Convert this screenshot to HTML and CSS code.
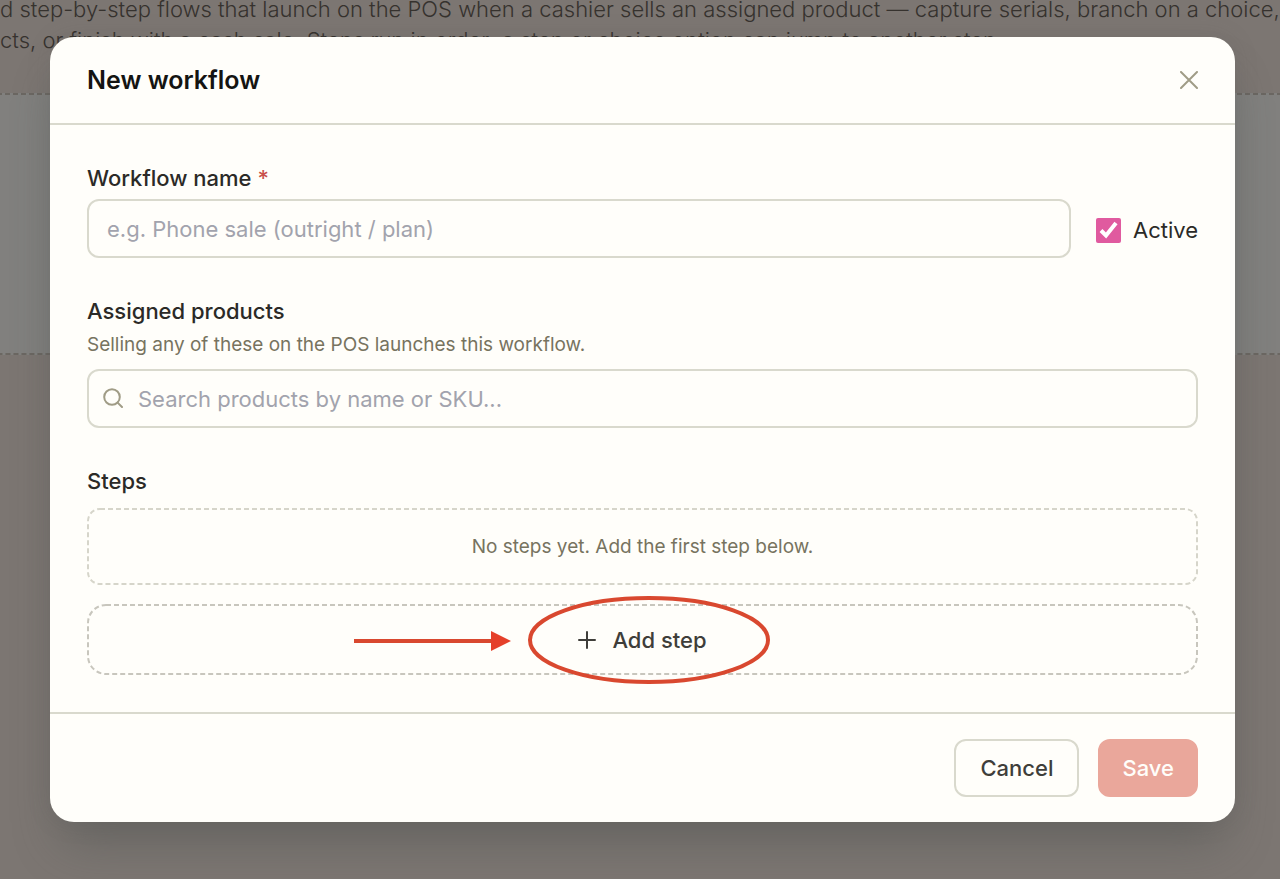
FILE: index.html
```html
<!DOCTYPE html>
<html lang="en">
<head>
    <meta charset="UTF-8">
    <meta name="viewport" content="width=device-width, initial-scale=1.0">
    <title>New workflow</title>
    <link rel="stylesheet" href="styles.css">
</head>
<body>
    <main class="page">
        <p class="page-intro">d step-by-step flows that launch on the POS when a cashier sells an assigned product — capture serials, branch on a choice,<br>cts, or finish with a cash sale. Steps run in order; a step or choice option can jump to another step.</p>
        <div class="page-empty">
            <svg class="dashes" aria-hidden="true"><rect class="dashes-line"/></svg>
        </div>
    </main>

    <div class="overlay">
        <form class="modal" role="dialog" aria-labelledby="modal-title">
            <header class="modal-header">
                <h1 id="modal-title">New workflow</h1>
                <button type="button" class="btn-close" aria-label="Close">
                    <svg width="18" height="18" viewBox="0 0 18 18"><path d="M1 1l16 16M17 1L1 17"/></svg>
                </button>
            </header>

            <div class="modal-body">
                <div class="name-row">
                    <div class="name-field">
                        <label class="form-label" for="name">Workflow name <span class="required">*</span></label>
                        <input type="text" id="name" class="form-control" placeholder="e.g. Phone sale (outright / plan)">
                    </div>
                    <label class="active-field">
                        <input type="checkbox" class="checkbox" checked>
                        Active
                    </label>
                </div>

                <div class="form-group">
                    <label class="form-label" for="products">Assigned products</label>
                    <p class="form-help">Selling any of these on the POS launches this workflow.</p>
                    <div class="search">
                        <svg class="search-icon" width="20" height="20" viewBox="0 0 20 20"><circle cx="9" cy="9" r="7.8"/><path d="M14.6 14.6L19 19"/></svg>
                        <input type="text" id="products" class="form-control" placeholder="Search products by name or SKU...">
                    </div>
                </div>

                <div class="form-group">
                    <h2 class="form-label">Steps</h2>
                    <div class="steps-empty">
                        <svg class="dashes" aria-hidden="true"><rect class="dashes-line"/></svg>
                        No steps yet. Add the first step below.
                    </div>
                    <button type="button" class="btn-add">
                        <svg class="dashes" aria-hidden="true"><rect class="dashes-line"/></svg>
                        <svg class="plus-icon" width="18" height="18" viewBox="0 0 18 18"><path d="M9 1v16M1 9h16"/></svg>
                        Add step
                        <svg class="callout" width="418" height="90" viewBox="0 0 418 90" aria-hidden="true">
                            <path class="callout-line" d="M0 45h140"/>
                            <path class="callout-head" d="M137 35l20 10-20 10z"/>
                            <ellipse class="callout-line" cx="295" cy="44" rx="119" ry="42"/>
                        </svg>
                    </button>
                </div>
            </div>

            <footer class="modal-footer">
                <button type="button" class="btn">Cancel</button>
                <button type="submit" class="btn btn-primary" disabled>Save</button>
            </footer>
        </form>
    </div>
</body>
</html>
```
FILE: styles.css
```css
* {
    box-sizing: border-box;
}
body {
    margin: 0;
    font-family: Inter, "Liberation Sans", sans-serif;
    font-size: 22px;
    line-height: 32px;
    color: #2b2a27;
    background: #7c7672;
    overflow: hidden;
}
h1, h2, p {
    margin: 0;
}
button, input {
    font: inherit;
    color: inherit;
}
svg {
    fill: none;
}

/* page behind the modal */
.page {
    color: #36322e;
}
.page-intro {
    margin-top: -6px;
    line-height: 31px;
    font-weight: 300;
    white-space: nowrap;
}
.page-empty {
    position: relative;
    height: 262px;
    margin: 37px -24px 0;
    background: #81807e;
}
.page-empty .dashes {
    stroke: #6b6762;
}

/* dashed frame */
.dashes {
    position: absolute;
    inset: 0;
    width: 100%;
    height: 100%;
    stroke: #d6d5ca;
    stroke-width: 2;
    stroke-dasharray: 5 3;
}
.dashes-line {
    x: 1px;
    y: 1px;
    width: calc(100% - 2px);
    height: calc(100% - 2px);
    rx: 12px;
}

.overlay {
    position: absolute;
    inset: 0;
    padding: 37px 45px 57px 50px;
}
.modal {
    background: #fffefa;
    border-radius: 24px;
    box-shadow: 0 32px 48px -12px rgba(75, 80, 78, 0.45), 0 0 24px rgba(85, 85, 85, 0.15);
}
.modal-header {
    display: flex;
    align-items: center;
    justify-content: space-between;
    height: 88px;
    padding: 0 37px;
    border-bottom: 2px solid #d9d9cd;
}
.modal-header h1 {
    font-size: 25px;
    font-weight: 600;
    color: #141412;
}
.btn-close {
    display: flex;
    padding: 0;
    border: 0;
    background: none;
    stroke: #a09c86;
    stroke-width: 2;
    stroke-linecap: round;
    cursor: pointer;
}

.modal-body {
    padding: 37px;
}
.name-row {
    display: flex;
    align-items: flex-end;
    gap: 25px;
}
.name-field {
    flex: 1;
}
.form-group {
    margin-top: 37px;
}
.form-label {
    display: block;
    margin-bottom: 5px;
    font-size: 22px;
    font-weight: 500;
}
.required {
    color: #c9504a;
}
.form-control {
    display: block;
    width: 100%;
    height: 59px;
    padding: 0 18px;
    border: 2px solid #d9d9cd;
    border-radius: 12px;
    background: #fffefa;
}
.form-control::placeholder {
    color: #a2a3ad;
    opacity: 1;
}
.active-field {
    display: flex;
    align-items: center;
    gap: 12px;
    height: 56px;
}
.checkbox {
    width: 25px;
    height: 25px;
    margin: 0;
    accent-color: #e05a9f;
}
.form-group .form-label {
    margin-bottom: 0;
}
.form-help {
    padding: 2px 0 8px;
    font-size: 19px;
    color: #77735f;
}
.search {
    position: relative;
}
.search .form-control {
    padding-left: 49px;
}
.search-icon {
    position: absolute;
    top: 19px;
    left: 16px;
    stroke: #a09c86;
    stroke-width: 2;
    stroke-linecap: round;
}
.steps-empty {
    position: relative;
    margin: 11px 0 19px;
    padding: 23px;
    text-align: center;
    font-size: 19px;
    line-height: 31px;
    color: #77735f;
}
.btn-add {
    position: relative;
    display: flex;
    align-items: center;
    justify-content: center;
    gap: 16px;
    width: 100%;
    height: 71px;
    border: 0;
    background: none;
    font-weight: 500;
    color: #3f3e3a;
    cursor: pointer;
}
.btn-add .dashes {
    stroke: #c8c6bd;
}
.btn-add .dashes-line {
    rx: 18px;
}
.plus-icon {
    stroke: #3f3e3a;
    stroke-width: 2;
    stroke-linecap: round;
}

/* arrow and ring pointing at the button */
.callout {
    position: absolute;
    top: -8px;
    left: calc(50% - 289px);
    pointer-events: none;
}
.callout-line {
    stroke: #d9482f;
    stroke-width: 4;
}
.callout-head {
    fill: #e5402a;
}

.modal-footer {
    display: flex;
    justify-content: flex-end;
    gap: 19px;
    padding: 25px 37px;
    border-top: 2px solid #d9d9cd;
}
.btn {
    height: 58px;
    padding: 0 24px;
    border: 2px solid #d9d9cd;
    border-radius: 12px;
    background: #fffefa;
    font-weight: 500;
    color: #3f3e3a;
    cursor: pointer;
}
.btn-primary {
    padding: 0 22px;
    border-color: #eaa79b;
    background: #eaa79b;
    color: #fffefa;
}
```
